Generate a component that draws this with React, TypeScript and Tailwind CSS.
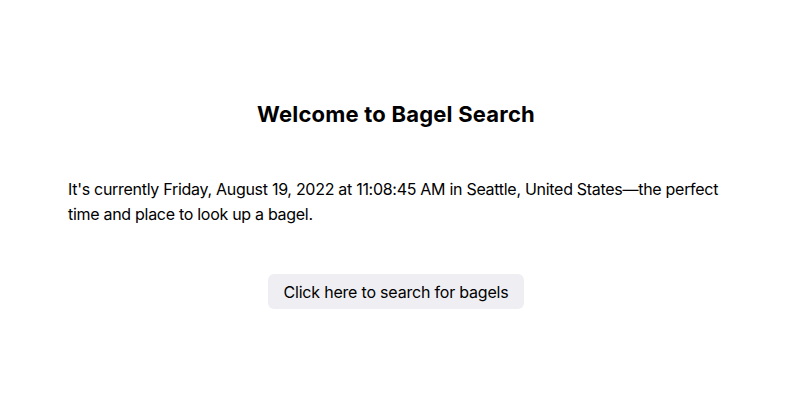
export default function App() {
  return (
    <div className="min-h-[413px] bg-white text-black pl-[68px] pr-[78px] pt-[99px]" style={{ fontFamily: "Inter, 'Noto Sans', sans-serif" }}>
      <h1 className="text-center text-[22px] font-bold leading-[30px] tracking-[0.2px]">Welcome to Bagel Search</h1>
      <p className="mt-[48px] text-[16px] leading-[25px] tracking-[-0.29px]">
        It's currently Friday, August 19, 2022 at 11:08:45 AM in Seattle, United States—the perfect time and place to look up a bagel.
      </p>
      <div className="mt-[47px] flex justify-center">
        <button className="bg-[#efeff3] rounded-[6px] h-[35px] px-[16px] text-[16px] leading-[20px] tracking-[-0.2px]">Click here to search for bagels</button>
      </div>
    </div>
  );
}
